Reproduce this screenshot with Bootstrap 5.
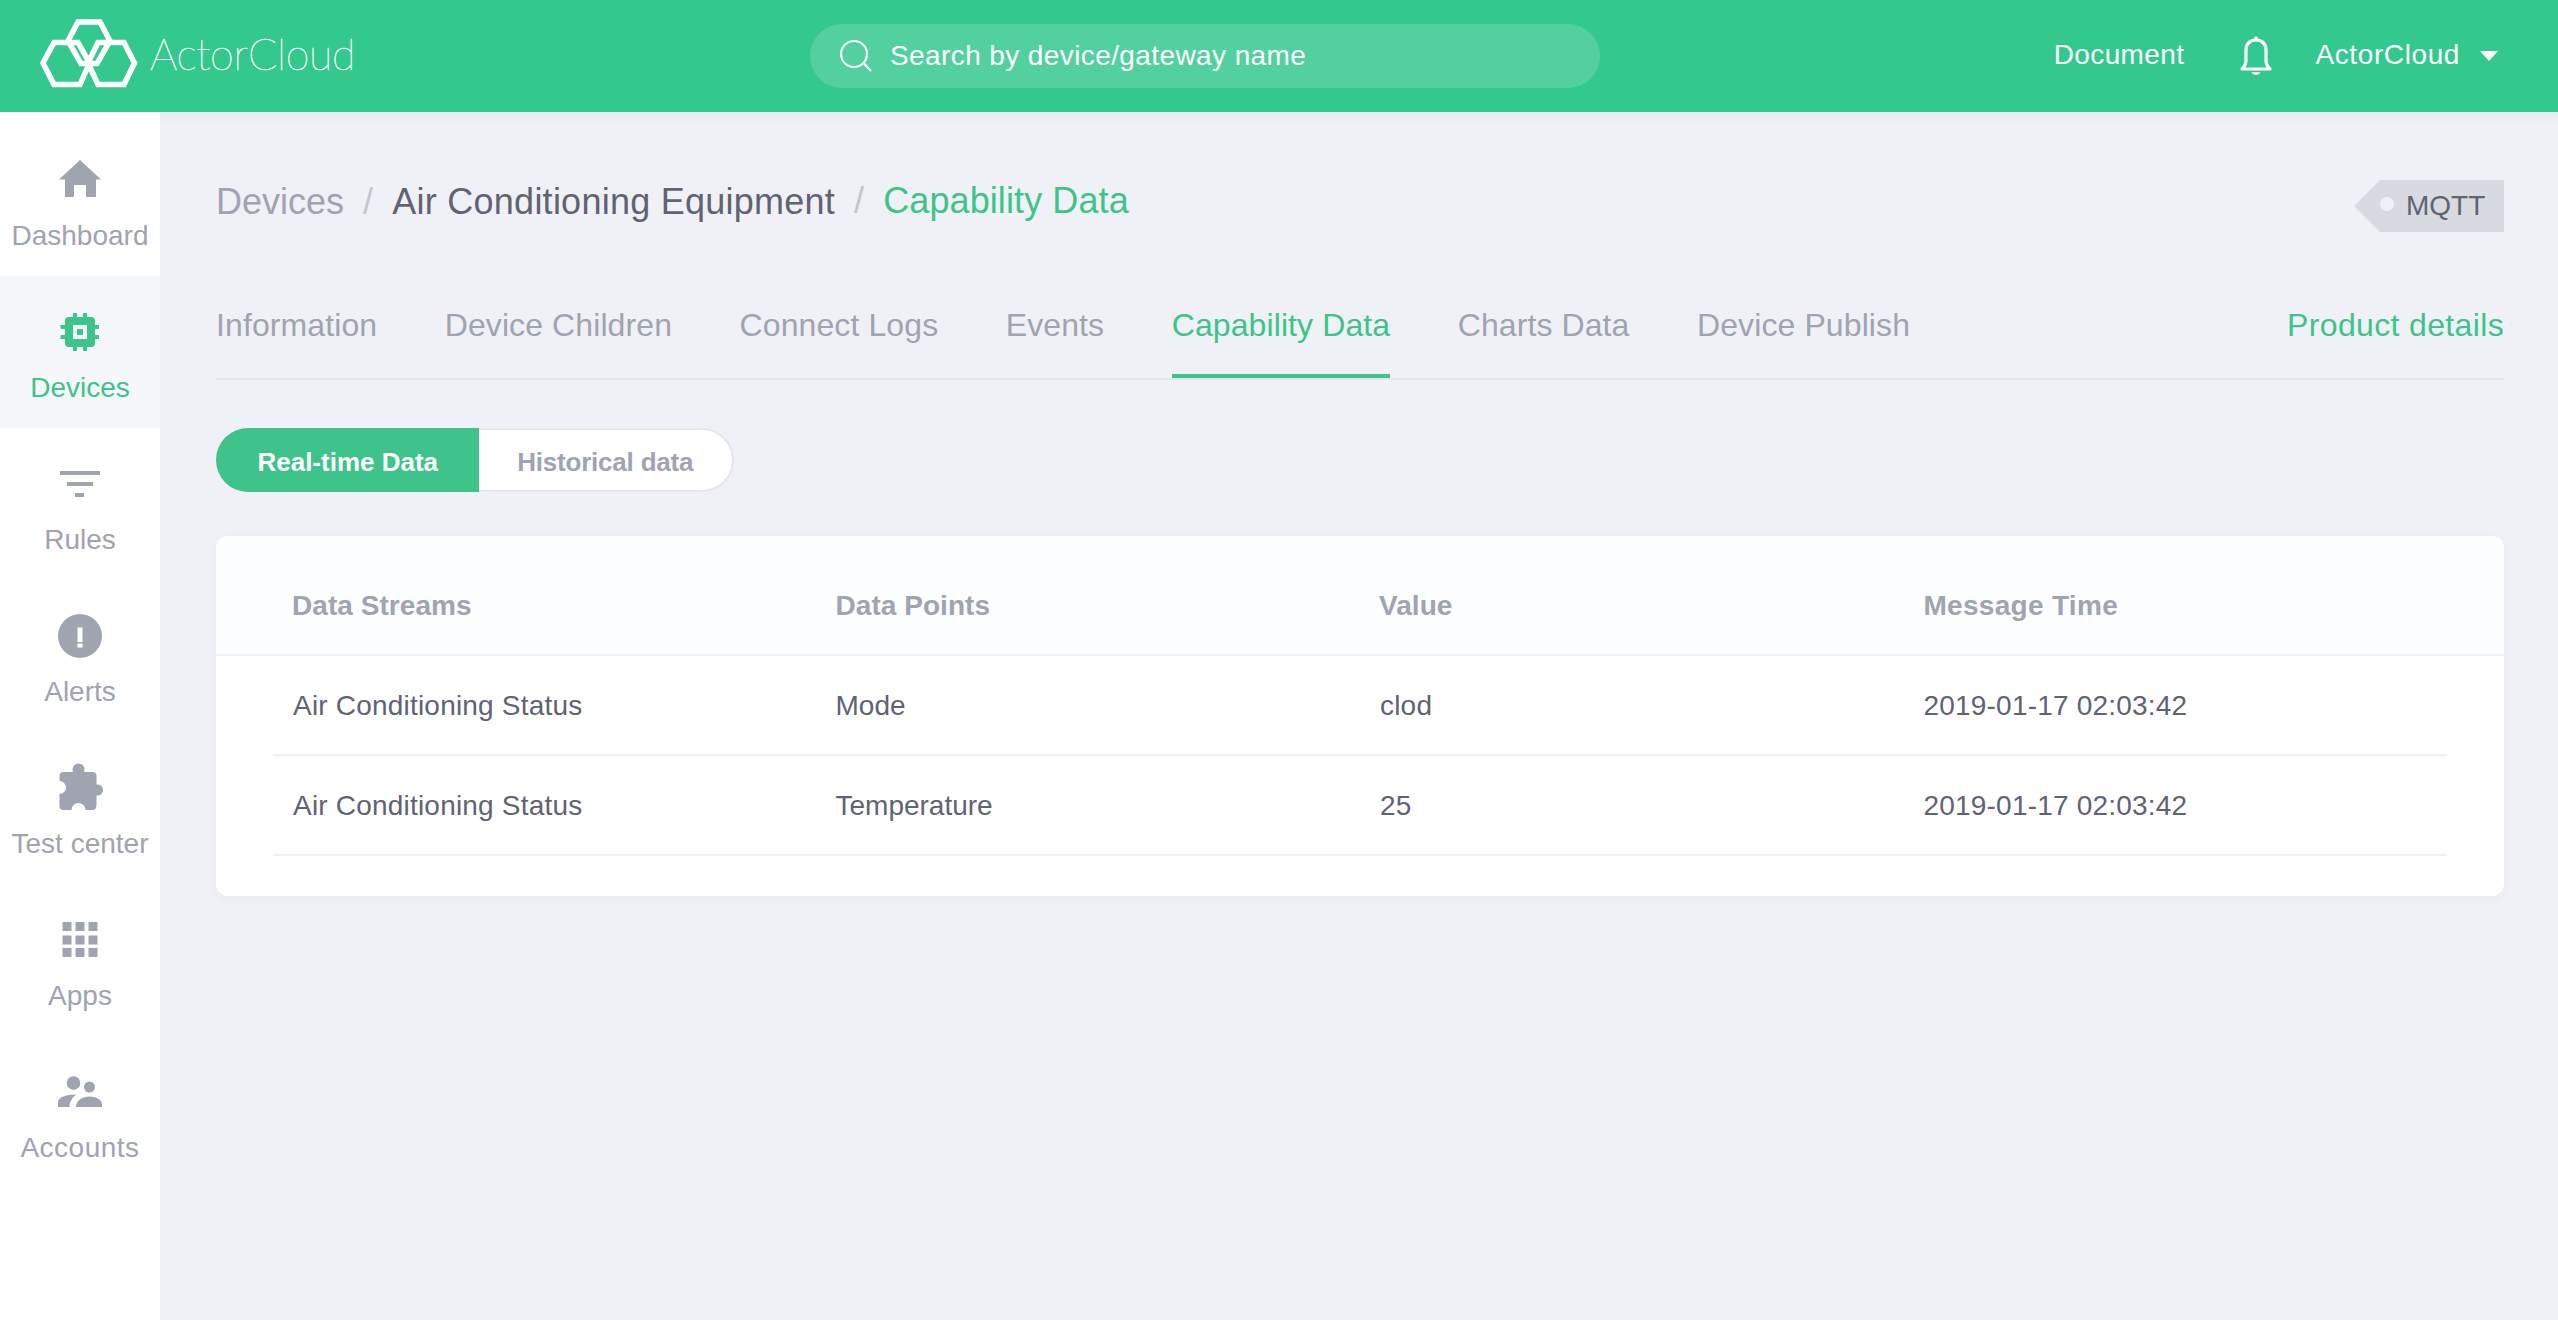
<!DOCTYPE html>
<html lang="en">
<head>
<meta charset="utf-8">
<title>ActorCloud</title>
<link href="https://cdn.jsdelivr.net/npm/bootstrap@5.3.0/dist/css/bootstrap.min.css" rel="stylesheet">
<style>
html,body{height:100%}
body{font-family:"Liberation Sans",Arial,sans-serif;background:#f0f1f6;color:#5f6372;font-size:28px;overflow:hidden}
.ac-top{height:112px;background:#33c88e;padding:0 0 0 36px;flex-wrap:nowrap;position:relative;z-index:2}
.ac-brand{display:flex;align-items:center;gap:0;padding:0;margin:0;width:774px;color:#fff;text-decoration:none}
.ac-wordmark{font-family:Lato,"Liberation Sans",sans-serif;font-weight:100;font-size:43px;letter-spacing:-.3px;color:#fff;-webkit-text-stroke:.5px #fff;margin:-5px 0 0 8px;line-height:1}
.ac-search{width:790px;height:64px;border-radius:32px;background:rgba(255,255,255,.16);padding-left:30px;gap:18px}
.ac-search input{background:transparent;border:0;outline:0;color:#fff;font-size:28px;padding:0;flex:1;letter-spacing:.4px;min-width:0}
.ac-search input::placeholder{color:#fff;opacity:1}
.ac-right{margin-left:auto;padding-right:60px;gap:0;color:#fff}
.ac-right a{color:#fff;text-decoration:none;letter-spacing:.4px;margin-top:-2px}
.ac-name{letter-spacing:.6px;margin-top:-2px}
.ac-bell{margin:0 43px 0 56px}
.ac-caret{width:0;height:0;border-left:9px solid transparent;border-right:9px solid transparent;border-top:10px solid #fff;margin-left:20px}
.ac-shell{height:calc(100% - 112px)}
.ac-side{width:160px;flex:none;background:#fff;padding-top:12px;height:100%}
.ac-side .nav-link{height:152px;padding:31px 0 0;text-align:center;color:#a0a3b0;font-size:28px;line-height:38px;white-space:nowrap}
.ac-side .nav-link svg{display:block;margin:0 auto 14px;fill:#a0a3b0}
.ac-side .nav-link.active{background:#f5f7fb;color:#3cc48a}
.ac-side .nav-link.active svg{fill:#3cc48a}
.ac-side .nav-link.ac-wide{letter-spacing:.5px}
.ac-main{flex:1;min-width:0;padding:68px 54px 0 56px;box-shadow:inset 0 14px 14px -14px rgba(120,125,170,.12)}
.ac-head{height:52px}
.ac-crumbs{margin:-4px 0 0;font-size:36px;line-height:52px;--bs-breadcrumb-divider-color:#c3c6ce;--bs-breadcrumb-item-padding-x:19px}
.ac-crumbs .breadcrumb-item{color:#a0a3b0}
.ac-crumbs .breadcrumb-item::before{color:#c3c6ce}
.ac-crumbs .ac-mid{color:#5f6372;letter-spacing:.25px}
.ac-crumbs .breadcrumb-item.active{color:#3cc48a;margin-top:-1px;letter-spacing:.1px}
.ac-tag{width:150px;height:52px;background:#d8dae1;clip-path:polygon(26px 0,100% 0,100% 100%,26px 100%,0 50%);font-size:28px;color:#5f6372;padding-left:26px;gap:12px;line-height:1}
.ac-dot{width:14px;height:14px;border-radius:50%;background:#f0f1f6;margin-top:-4px}
.ac-tabs{margin-top:73px;border-bottom:2px solid #e4e6ec;gap:67.5px;--bs-nav-tabs-border-width:0}
.ac-tabs .nav-link{padding:0 0 29px;font-size:32px;line-height:40px;letter-spacing:.1px;color:#a0a3b0;border:0;border-bottom:4px solid transparent;margin-bottom:0;background:transparent;border-radius:0}
.ac-tabs .nav-link.active{color:#3cc48a;border-bottom-color:#3cc48a;background:transparent}
.ac-tabs .ac-prod{margin-left:auto;color:#3cc48a;letter-spacing:.35px}
.ac-toggle{margin-top:48px;height:64px;display:flex;width:518px}
.ac-toggle .btn{font-size:26px;font-weight:700;height:64px;padding:3px 0 0;line-height:1;--bs-btn-border-radius:32px}
.ac-toggle .ac-on{width:263px;background:#3ec38a;border:0;color:#fff}
.ac-toggle .ac-off{width:255px;background:#fff;border:2px solid #e4e6eb;border-left:0;color:#a0a3b0;letter-spacing:-.2px}
.ac-card{margin-top:44px;height:360px;border:0;border-radius:12px;background:#fff;overflow:hidden;box-shadow:0 2px 8px rgba(120,125,170,.06)}
.ac-table{margin:0;table-layout:fixed;--bs-table-bg:transparent;--bs-table-border-color:transparent;color:#5f6372;font-size:28px}
.ac-table .ac-edge{width:57px;padding:0}
.ac-table th{height:119px;background:#fcfdfe;color:#a0a3b0;font-weight:700;vertical-align:middle;padding:22px 0 0 19px;border-bottom:2px solid #f0f1f5;box-shadow:none;letter-spacing:.05px}
.ac-table th.ac-time{padding-left:20px;letter-spacing:.3px}
.ac-table td{height:100px;vertical-align:middle;padding:2px 0 0 19px;border-bottom:2px solid #f0f1f5;color:#5f6372}
.ac-table td.ac-spaced{padding-left:20px;letter-spacing:.2px}
.ac-table td.ac-edge{border-bottom:0;padding:0}
</style>
</head>
<body>
<nav class="navbar ac-top">
  <a class="navbar-brand ac-brand" href="#">
    <svg width="106" height="76" viewBox="36 18 106 76" fill="none" stroke="#fff" stroke-width="5.500" stroke-linejoin="miter">
      <path d="M43 63 L54 42.500 H78 L89.500 63 L80 84.500 H54 Z"/>
      <path d="M88 63 L98 42.500 H124 L134.500 63 L124 84.500 H98 Z"/>
      <path d="M68 41 L78 22 H100 L110 41 L97 63.500 H81 Z"/>
    </svg>
    <span class="ac-wordmark">ActorCloud</span>
  </a>
  <div class="d-flex align-items-center ac-search">
    <svg width="32" height="32" viewBox="0 0 32 32" fill="none" stroke="#fff" stroke-width="2.200"><circle cx="14" cy="14" r="13"/><path d="M23.500 23 L31 31"/></svg>
    <input type="text" placeholder="Search by device/gateway name" aria-label="Search">
  </div>
  <div class="d-flex align-items-center ac-right">
    <a href="#">Document</a>
    <svg class="ac-bell" width="32" height="40" viewBox="0 0 32 40" fill="none" stroke="#fff" stroke-width="3.200"><path d="M2 33 C5 30 6 28 6 24 V14 C6 8 10 4 16 4 C22 4 26 8 26 14 V24 C26 28 27 30 30 33 Z" stroke-linejoin="round"/><circle cx="16" cy="2.500" r="2" fill="#fff" stroke="none"/><path d="M12 36.500 Q16 40.500 20 36.500 Z" fill="#fff" stroke-width="1"/></svg>
    <span class="ac-name">ActorCloud</span>
    <span class="ac-caret"></span>
  </div>
</nav>
<div class="d-flex ac-shell">
  <aside class="ac-side">
    <ul class="nav flex-column">
      <li class="nav-item"><a class="nav-link" href="#"><svg width="48" height="48" viewBox="0 0 48 48"><path d="M24 5 L45 24.500 H40 V42 H30 V30 H18 V42 H9 V24.500 H3 Z"/></svg>Dashboard</a></li>
      <li class="nav-item"><a class="nav-link active" href="#"><svg width="48" height="48" viewBox="0 0 48 48"><path fill-rule="evenodd" d="M17 6 H21 V10 H27 V6 H31 V10 H35 Q39 10 39 14 V18 H43 V22 H39 V28 H43 V32 H39 V36 Q39 40 35 40 H31 V44 H27 V40 H21 V44 H17 V40 H13 Q9 40 9 36 V32 H4.500 V28 H9 V22 H4.500 V18 H9 V14 Q9 10 13 10 H17 Z M17 18 V32 H31 V18 Z"/><rect x="21" y="22" width="6" height="6"/></svg>Devices</a></li>
      <li class="nav-item"><a class="nav-link" href="#"><svg width="48" height="48" viewBox="0 0 48 48"><rect x="4" y="12" width="40" height="4"/><rect x="11" y="23" width="26" height="4"/><rect x="19" y="34" width="9" height="4"/></svg>Rules</a></li>
      <li class="nav-item"><a class="nav-link" href="#"><svg width="48" height="48" viewBox="0 0 48 48"><path fill-rule="evenodd" d="M24 3 A22 22 0 1 1 24 47 A22 22 0 1 1 24 3 Z M21.500 16.500 V31 H26.500 V16.500 Z M21.500 32.500 V36.500 H26.500 V32.500 Z"/></svg>Alerts</a></li>
      <li class="nav-item"><a class="nav-link" href="#"><svg width="48" height="48" viewBox="-1.500 0 48 48"><path d="M6 9 H15.500 A6 6 0 1 1 26.500 9 H35 Q39 9 39 13 V21.500 A5.600 5.600 0 1 1 39 32.500 V42 Q39 47 35 47 H28 A7 7 0 0 0 14 47 H6 Q2 47 2 43 V31 A6.500 6.500 0 0 0 2 18 V13 Q2 9 6 9 Z"/></svg>Test center</a></li>
      <li class="nav-item"><a class="nav-link" href="#"><svg width="48" height="48" viewBox="0 0 48 48"><rect x="6.500" y="7" width="9" height="9"/><rect x="19.500" y="7" width="9" height="9"/><rect x="32.500" y="7" width="9" height="9"/><rect x="6.500" y="20.500" width="9" height="9"/><rect x="19.500" y="20.500" width="9" height="9"/><rect x="32.500" y="20.500" width="9" height="9"/><rect x="6.500" y="33" width="9" height="9"/><rect x="19.500" y="33" width="9" height="9"/><rect x="32.500" y="33" width="9" height="9"/></svg>Apps</a></li>
      <li class="nav-item"><a class="nav-link ac-wide" href="#"><svg width="48" height="48" viewBox="0 0 48 48"><circle cx="17.500" cy="16" r="6.800"/><circle cx="33.500" cy="20" r="5.500"/><path d="M2 40 V35 C2 31 9 27.500 20 27.500 C16 31 13.500 35 13.500 40 Z"/><path d="M20 40 C20 33 27 29.500 33 29.500 C40 29.500 46 33 46 37 V40 Z"/></svg>Accounts</a></li>
    </ul>
  </aside>
  <main class="ac-main">
    <div class="d-flex justify-content-between align-items-start ac-head">
      <ol class="breadcrumb ac-crumbs">
        <li class="breadcrumb-item">Devices</li>
        <li class="breadcrumb-item ac-mid">Air Conditioning Equipment</li>
        <li class="breadcrumb-item active">Capability Data</li>
      </ol>
      <div class="d-flex align-items-center ac-tag"><span class="ac-dot"></span><span>MQTT</span></div>
    </div>
    <ul class="nav nav-tabs ac-tabs">
      <li class="nav-item"><a class="nav-link" href="#">Information</a></li>
      <li class="nav-item"><a class="nav-link" href="#">Device Children</a></li>
      <li class="nav-item"><a class="nav-link" href="#">Connect Logs</a></li>
      <li class="nav-item"><a class="nav-link" href="#">Events</a></li>
      <li class="nav-item"><a class="nav-link active" href="#">Capability Data</a></li>
      <li class="nav-item"><a class="nav-link" href="#">Charts Data</a></li>
      <li class="nav-item"><a class="nav-link" href="#">Device Publish</a></li>
      <li class="nav-item ac-prod"><a class="nav-link ac-prod" href="#">Product details</a></li>
    </ul>
    <div class="btn-group ac-toggle" role="group">
      <button type="button" class="btn ac-on">Real-time Data</button>
      <button type="button" class="btn ac-off">Historical data</button>
    </div>
    <div class="card ac-card">
      <table class="table ac-table">
        <thead>
          <tr><th class="ac-edge"></th><th>Data Streams</th><th>Data Points</th><th>Value</th><th class="ac-time">Message Time</th><th class="ac-edge"></th></tr>
        </thead>
        <tbody>
          <tr><td class="ac-edge"></td><td class="ac-spaced">Air Conditioning Status</td><td>Mode</td><td class="ac-spaced">clod</td><td class="ac-spaced">2019-01-17 02:03:42</td><td class="ac-edge"></td></tr>
          <tr><td class="ac-edge"></td><td class="ac-spaced">Air Conditioning Status</td><td>Temperature</td><td class="ac-spaced">25</td><td class="ac-spaced">2019-01-17 02:03:42</td><td class="ac-edge"></td></tr>
        </tbody>
      </table>
    </div>
  </main>
</div>
<script src="https://cdn.jsdelivr.net/npm/bootstrap@5.3.0/dist/js/bootstrap.bundle.min.js"></script>
</body>
</html>
